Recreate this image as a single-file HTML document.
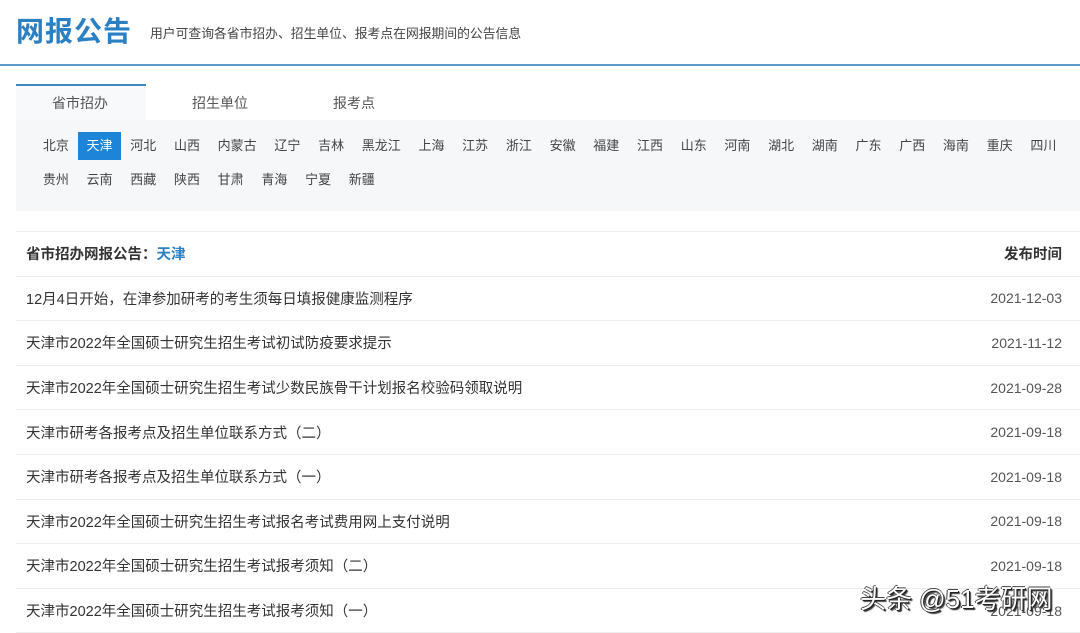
<!DOCTYPE html>
<html><head><meta charset="utf-8"><style>
*{margin:0;padding:0;box-sizing:border-box}
body{width:1080px;height:628px;overflow:hidden;background:#fff;font-family:"Liberation Sans","Noto Sans CJK SC",sans-serif;color:#333;position:relative}
.title{position:absolute;left:16px;top:10px;font-size:28px;font-weight:bold;color:#2b7fc3;letter-spacing:1px}
.sub{position:absolute;left:150px;top:23px;font-size:12.8px;color:#444}
.line{position:absolute;left:0;top:64px;width:1080px;height:2px;background:#5b9ccc}
.tabline{position:absolute;left:16px;top:84px;width:130px;height:2px;background:#3c8ac6}
.tab{position:absolute;top:93px;font-size:14px;color:#555}
.acttab{position:absolute;left:16px;top:86px;width:130px;height:34px;background:#f7f9fb}
.panel{position:absolute;left:16px;top:120px;width:1064px;height:91px;background:#f5f7f9}
.row{position:absolute;left:34px;display:flex;font-size:13px;color:#444}
.row span{padding:0 8.85px;height:28px;line-height:28px;white-space:nowrap}
.row span.on{background:#1e84d8;color:#fff}
.tbl{position:absolute;left:16px;top:231px;width:1064px;border-top:1px solid #eee}
.tr{height:44.6px;border-bottom:1px solid #eee;display:flex;justify-content:space-between;align-items:center;padding:0 18px 0 10px;font-size:14.5px}
.tr .d{color:#555;font-size:14px}
.th{font-weight:bold;color:#333}
.wm{position:absolute;left:860px;top:579px;font-size:26px;color:#fff;text-shadow:1px 1px 0 #222,-1px 0 0 #444,0 -1px 0 #444,2px 2px 1px #333}
</style></head><body>
<div class="title">网报公告</div>
<div class="sub">用户可查询各省市招办、招生单位、报考点在网报期间的公告信息</div>
<div class="line"></div>
<div class="acttab"></div>
<div class="tabline"></div>
<div class="tab" style="left:52px">省市招办</div>
<div class="tab" style="left:192px">招生单位</div>
<div class="tab" style="left:333px">报考点</div>
<div class="panel"></div>
<div class="row" style="top:132px"><span>北京</span><span class="on">天津</span><span>河北</span><span>山西</span><span>内蒙古</span><span>辽宁</span><span>吉林</span><span>黑龙江</span><span>上海</span><span>江苏</span><span>浙江</span><span>安徽</span><span>福建</span><span>江西</span><span>山东</span><span>河南</span><span>湖北</span><span>湖南</span><span>广东</span><span>广西</span><span>海南</span><span>重庆</span><span>四川</span></div>
<div class="row" style="top:166px"><span>贵州</span><span>云南</span><span>西藏</span><span>陕西</span><span>甘肃</span><span>青海</span><span>宁夏</span><span>新疆</span></div>
<div class="tbl">
<div class="tr th"><span>省市招办网报公告：<span style="color:#2b7fc3">天津</span></span><span>发布时间</span></div>
<div class="tr"><span>12月4日开始，在津参加研考的考生须每日填报健康监测程序</span><span class="d">2021-12-03</span></div>
<div class="tr"><span>天津市2022年全国硕士研究生招生考试初试防疫要求提示</span><span class="d">2021-11-12</span></div>
<div class="tr"><span>天津市2022年全国硕士研究生招生考试少数民族骨干计划报名校验码领取说明</span><span class="d">2021-09-28</span></div>
<div class="tr"><span>天津市研考各报考点及招生单位联系方式（二）</span><span class="d">2021-09-18</span></div>
<div class="tr"><span>天津市研考各报考点及招生单位联系方式（一）</span><span class="d">2021-09-18</span></div>
<div class="tr"><span>天津市2022年全国硕士研究生招生考试报名考试费用网上支付说明</span><span class="d">2021-09-18</span></div>
<div class="tr"><span>天津市2022年全国硕士研究生招生考试报考须知（二）</span><span class="d">2021-09-18</span></div>
<div class="tr"><span>天津市2022年全国硕士研究生招生考试报考须知（一）</span><span class="d">2021-09-18</span></div>
</div>
<div class="wm">头条 @51考研网</div>
</body></html>
